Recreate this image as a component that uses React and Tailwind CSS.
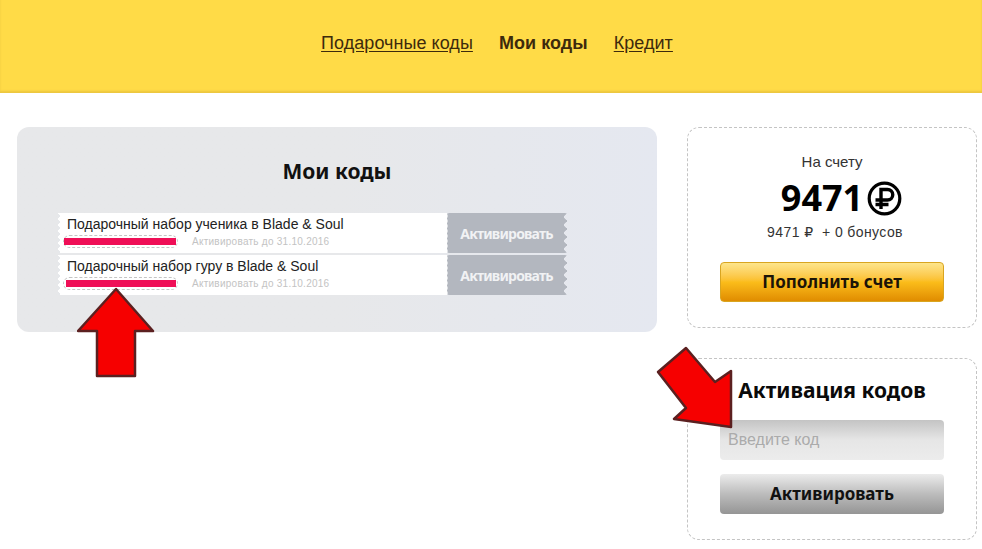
const sans = "font-['Liberation_Sans',Arial,sans-serif]";
const head = "font-['Noto_Sans',sans-serif]";

function Ticket({ title, barClass }) {
  return (
    <div className="flex h-10 w-[509px]">
      <div className="relative flex-1 bg-white pl-[9px] pt-[3px]">
        <div className="absolute left-0 top-0 h-full w-[3px] bg-[radial-gradient(circle_at_0_50%,#e6e8eb_1.6px,transparent_2px)] bg-[length:3px_6px]" />
        <div className="text-[14px] leading-4 text-[#222]">{title}</div>
        <div className="mt-[3px] flex items-center">
          <div className="ml-[-4px] flex h-[13px] w-[115px] items-center justify-end rounded-[7px] border border-dashed border-[#c4c4c4]">
            <div className={`h-[7px] bg-[#ef0f57] ${barClass}`} />
            <div className="w-px" />
          </div>
          <div className="ml-[14px] text-[10px] leading-3 tracking-[0.26px] text-[#c3c3c3]">Активировать до 31.10.2016</div>
        </div>
      </div>
      <div className={`relative flex w-[120px] items-center justify-center rounded-[2px] border-l border-dashed border-[#dfe1e4] bg-[#b3b7bf] pr-[2px] ${head} text-[14px] font-bold tracking-[-0.8px] text-[#f1f2f4]`}>
        Активировать
        <div className="absolute right-0 top-0 h-full w-[4px] bg-[radial-gradient(circle_at_100%_50%,#e6e8ee_2.6px,transparent_3px)] bg-[length:4px_8px]" />
      </div>
    </div>
  );
}

function BigRuble() {
  return (
    <svg width="35" height="35" viewBox="0 0 35 35" fill="none" stroke="#000">
      <circle cx="17.5" cy="17.5" r="15.3" strokeWidth="3.2" />
      <path d="M14 28V8.5h6.5a5 5 0 0 1 0 10.5H8.5M8.5 23.5h13" strokeWidth="3.4" />
    </svg>
  );
}

function UpArrow() {
  return (
    <svg className="absolute left-[77px] top-[287px]" width="78" height="92" viewBox="0 0 78 92">
      <path d="M39 2 L76 44 H58 V89 H20 V44 H1 Z" fill="#f60000" stroke="#5b2020" strokeWidth="2.5" strokeLinejoin="round" />
    </svg>
  );
}

function CornerArrow() {
  return (
    <svg className="absolute left-[650px] top-[340px]" width="90" height="95" viewBox="0 0 90 95">
      <path d="M36 8 L65 42 L81 31 V87 L24 79 L36 68 L8 32 Z" fill="#f60000" stroke="#5b2020" strokeWidth="2.5" strokeLinejoin="round" />
    </svg>
  );
}

export default function App() {
  return (
    <div className={`relative h-[549px] w-[982px] overflow-hidden bg-white ${sans}`}>
      <header className="flex h-[93px] items-center justify-center gap-[26px] bg-[#ffdb47] pb-[6px] pl-[12px] text-[18px] tracking-[0.05px] text-[#3d2a0c] shadow-[inset_0_-2px_2px_rgba(180,140,40,0.25)]">
        <a className="underline underline-offset-2">Подарочные коды</a>
        <span className="font-bold">Мои коды</span>
        <a className="underline underline-offset-2">Кредит</a>
      </header>

      <main className="flex items-start gap-[30px] pl-[17px] pt-[34px]">
        <section className="h-[205px] w-[640px] rounded-[12px] bg-gradient-to-r from-[#e7e8ea] via-[#e7e8ea] to-[#e5e8f0] pl-[41px] pt-[30px]">
          <h1 className={`-ml-[41px] w-[640px] text-center ${head} text-[21px] font-bold leading-[28px] text-[#111]`}>Мои коды</h1>
          <div className="mt-[28px] flex flex-col gap-[2px]">
            <Ticket title="Подарочный набор ученика в Blade & Soul" barClass="w-[112px]" />
            <Ticket title="Подарочный набор гуру в Blade & Soul" barClass="w-[110px]" />
          </div>
        </section>

        <aside className="flex w-[290px] flex-col gap-[30px]">
          <div className="flex h-[201px] flex-col items-center rounded-[12px] border border-dashed border-[#c4c4c4] pt-[26px]">
            <div className="text-[15px] leading-4 text-[#333]">На счету</div>
            <div className="mt-[8px] flex items-center gap-[4px] pl-[19px]">
              <span className={`${head} text-[36px] font-bold leading-[40px] text-black`}>9471</span>
              <BigRuble />
            </div>
            <div className="ml-[6px] mt-[6px] text-[14px] leading-4 tracking-[0.4px] text-[#333]">
              9471 <span className="font-['DejaVu_Sans']">₽</span>&nbsp; + 0 бонусов
            </div>
            <button className={`mt-[22px] h-10 w-[224px] rounded-[4px] border border-[#d9a520] bg-gradient-to-b from-[#fde58a] via-[#fbbd1a] to-[#e08c00] ${head} text-[17px] font-bold text-[#1c1408]`}>
              Пополнить счет
            </button>
          </div>

          <div className="flex h-[182px] flex-col items-center rounded-[12px] border border-dashed border-[#c4c4c4] pt-[16px]">
            <h2 className={`${head} whitespace-nowrap text-[21px] font-bold leading-[30px] text-[#0a0a0a]`}>Активация кодов</h2>
            <div className="mt-[15px] flex h-10 w-[224px] items-center rounded-[4px] bg-gradient-to-b from-[#c4c4c4] via-[#e6e6e6] to-[#ececec] pl-2 text-[16px] text-[#ababab]">
              Введите код
            </div>
            <button className={`mt-[14px] h-10 w-[224px] rounded-[4px] bg-gradient-to-b from-[#ececec] via-[#bcbcbc] to-[#959595] ${head} text-[17px] font-bold text-[#111]`}>
              Активировать
            </button>
          </div>
        </aside>
      </main>

      <UpArrow />
      <CornerArrow />
    </div>
  );
}
